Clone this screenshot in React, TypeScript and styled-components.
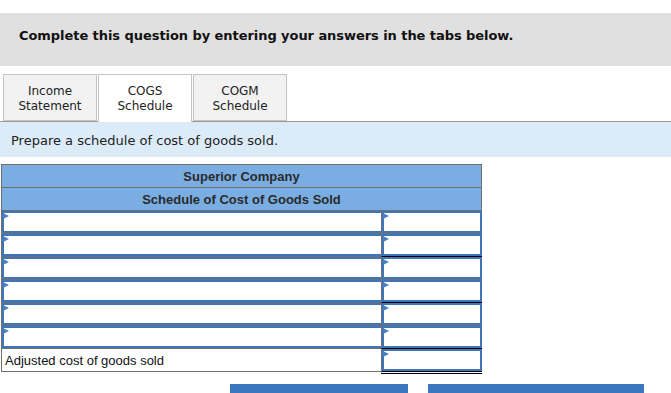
import React from "react";
import styled, { createGlobalStyle } from "styled-components";

const Global = createGlobalStyle`
  html, body { margin: 0; padding: 0; background: #fff; }
  body { font-family: "DejaVu Sans", Verdana, sans-serif; color: #000; overflow: hidden; }
`;

const Page = styled.div`
  width: 671px;
  padding-top: 13px;
`;

const Banner = styled.div`
  height: 53px;
  background: #e0e0e0;
  display: flex;
  align-items: center;
  padding-left: 19px;
  padding-bottom: 8px;
  box-sizing: border-box;
  font-weight: bold;
  font-size: 13px;
  letter-spacing: -0.06px;
  color: #111;
`;

const TabBar = styled.div`
  margin-top: 8px;
  display: flex;
  gap: 1px;
  padding-left: 3px;
  border-bottom: 1px solid #9a9a9a;
  height: 47px;
`;

const Tab = styled.div<{ $active?: boolean }>`
  width: 94px;
  box-sizing: border-box;
  height: ${(p) => (p.$active ? "48px" : "47px")};
  border: 1px solid #c4c4c4;
  border-bottom: ${(p) => (p.$active ? "none" : "1px solid #c4c4c4")};
  background: ${(p) => (p.$active ? "#fff" : "#f2f2f2")};
  display: flex;
  align-items: center;
  justify-content: center;
  text-align: center;
  font-size: 12px;
  line-height: 15px;
  color: #222;
  padding-top: ${(p) => (p.$active ? "1px" : "2px")};
`;

const Instruction = styled.div`
  height: 35px;
  background: #dcebf8;
  display: flex;
  align-items: center;
  padding-left: 11px;
  padding-top: 2px;
  box-sizing: border-box;
  font-size: 13px;
  color: #222;
`;

const Table = styled.div`
  margin-top: 7px;
  margin-left: 1px;
  width: 481px;
  font-family: "Liberation Sans", Arial, sans-serif;
`;

const HeaderRow = styled.div`
  height: 23px;
  box-sizing: border-box;
  background: #7aaee3;
  border: 1px solid #707070;
  border-bottom: none;
  display: flex;
  align-items: center;
  justify-content: center;
  padding-top: 1px;
  font-weight: bold;
  font-size: 13px;
  color: #2a2a2a;
`;

const Row = styled.div`
  display: grid;
  grid-template-columns: 380px 101px;
  height: 23px;
`;

const LeftCell = styled.div<{ $last?: boolean }>`
  position: relative;
  box-sizing: border-box;
  border-top: 1px solid #707070;
  border-left: 1px solid #707070;
  ${(p) => (p.$last ? "border-bottom: 1px solid #707070; height: 24px; padding-top: 1px;" : "")}
  display: flex;
  align-items: center;
  font-size: 13px;
  color: #111;
  padding-left: ${(p) => (p.$last ? "3px" : "0")};
`;

const RightCell = styled.div<{ $rule?: boolean; $total?: boolean }>`
  position: relative;
  box-sizing: border-box;
  border-top: 1px solid ${(p) => (p.$rule ? "#000" : "#707070")};
  border-left: 1px solid #707070;
  ${(p) => (p.$total ? "border-bottom: 3px double #000; height: 26px;" : "")}
`;

const Field = styled.div<{ $noRight?: boolean }>`
  box-sizing: border-box;
  width: 100%;
  height: 22px;
  background: #fff;
  border: 2px solid #3f76ba;
  ${(p) => (p.$noRight ? "border-right: none;" : "")}
`;

const Marker = styled.span`
  position: absolute;
  top: 2px;
  left: 1px;
  width: 0;
  height: 0;
  border-left: 6px solid #4a80c6;
  border-top: 3px solid transparent;
  border-bottom: 3px solid transparent;
`;

const Buttons = styled.div`
  display: flex;
  gap: 20px;
  padding-left: 230px;
  margin-top: 13px;
`;

const NavButton = styled.div<{ $w: number }>`
  width: ${(p) => p.$w}px;
  height: 36px;
  background: #3a77bd;
`;

const rules = [false, false, true, false, true, false];

export default function App() {
  return (
    <>
      <Global />
      <Page>
        <Banner>Complete this question by entering your answers in the tabs below.</Banner>
        <TabBar>
          <Tab>Income<br />Statement</Tab>
          <Tab $active>COGS<br />Schedule</Tab>
          <Tab>COGM<br />Schedule</Tab>
        </TabBar>
        <Instruction>Prepare a schedule of cost of goods sold.</Instruction>
        <Table>
          <HeaderRow>Superior Company</HeaderRow>
          <HeaderRow>Schedule of Cost of Goods Sold</HeaderRow>
          {rules.map((r, i) => (
            <Row key={i}>
              <LeftCell>
                <Field $noRight />
                <Marker />
              </LeftCell>
              <RightCell $rule={r}>
                <Field />
                <Marker />
              </RightCell>
            </Row>
          ))}
          <Row>
            <LeftCell $last>Adjusted cost of goods sold</LeftCell>
            <RightCell $rule $total>
              <Field />
              <Marker />
            </RightCell>
          </Row>
        </Table>
        <Buttons>
          <NavButton $w={178} role="button" aria-label="Income Statement" />
          <NavButton $w={216} role="button" aria-label="COGM Schedule" />
        </Buttons>
      </Page>
    </>
  );
}
